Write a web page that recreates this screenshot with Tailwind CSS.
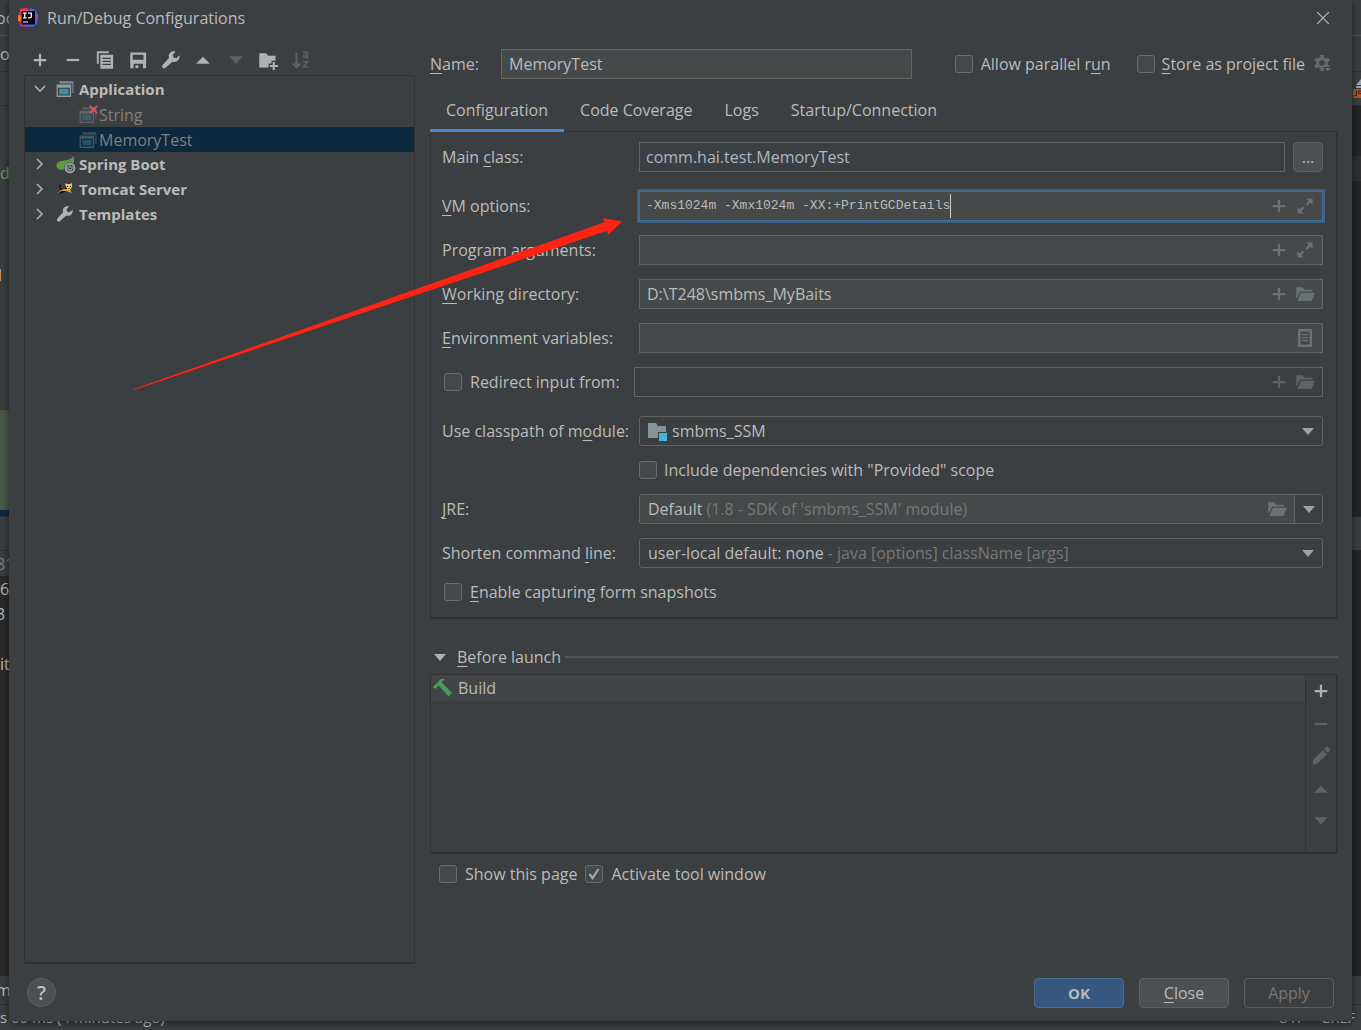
<!DOCTYPE html>
<html lang="en">
<head>
<meta charset="utf-8">
<meta name="viewport" content="width=device-width, initial-scale=1">
<title>Run/Debug Configurations</title>
<script src="https://cdn.jsdelivr.net/npm/@tailwindcss/browser@4"></script>
</head>
<body class="relative min-h-screen overflow-x-hidden bg-[#3c3f41] font-['Open_Sans','Noto_Sans',sans-serif] text-[16px] leading-5 text-[#bbbbbb]">

<!-- shared icon shapes -->
<svg class="hidden" aria-hidden="true">
  <symbol id="i-add" viewBox="0 0 16 16"><path d="M7.100 3h1.800v4.100H13v1.800H8.900V13H7.100V8.900H3V7.100h4.100z"/></symbol>
  <symbol id="i-remove" viewBox="0 0 16 16"><path d="M3 7.100h10v1.800H3z"/></symbol>
  <symbol id="i-up" viewBox="0 0 16 16"><path d="M2.500 11 8 5.300 13.500 11z"/></symbol>
  <symbol id="i-down" viewBox="0 0 16 16"><path d="M2.500 5 8 10.700 13.500 5z"/></symbol>
  <symbol id="i-wrench" viewBox="0 0 16 16"><path d="M14.700 4.200 12.300 6.500 10 5.900 9.400 3.700 11.700 1.300C10 .7 8.100 1.100 7 2.500 6.100 3.600 5.900 5 6.400 6.300L1.300 11.900c-.6.7-.6 1.600 0 2.300.7.700 1.700.7 2.400 0L9.100 9.300c1.400.6 3 .4 4.200-.7 1.300-1.100 1.900-2.800 1.400-4.400z"/></symbol>
  <symbol id="i-open" viewBox="0 0 16 16"><path d="M1 2.500h5l1.500 2H14V6H4.200L1 12z"/><path d="M4.800 7H16l-2.800 6.500H1.800z"/></symbol>
  <symbol id="i-expand" viewBox="0 0 16 16"><path d="M9 2h5v5l-1.800-1.800-2.400 2.500-1.200-1.200L11 4zM7 14H2V9l1.800 1.800 2.400-2.500 1.200 1.200L5 12z"/></symbol>
  <symbol id="i-app" viewBox="0 0 16 16"><path fill="#7f8b91" d="M3 1h12.500v10.500h-1V3H3z"/><path fill="#8f9ba1" fill-rule="evenodd" d="M.5 4h13v11H.5zm1.200 2.800v7h10.600v-7z"/><path fill="#3f8ea8" d="M2.800 7.800h8.400v5H2.800z"/></symbol>
  <symbol id="i-chev" viewBox="0 0 16 16"><path d="M5 3 10 8l-5 5" fill="none" stroke="#adadad" stroke-width="1.700"/></symbol>
</svg>

<!-- IDE window behind the dialog -->
<div class="absolute inset-0 flex justify-between overflow-hidden" aria-hidden="true">
  <div class="flex w-10 flex-col overflow-hidden bg-[#3c3f41]">
    <div class="flex h-9 items-center border-b border-[#555555]"><span class="-ml-1">oc</span></div>
    <div class="flex h-9 items-center border-b border-[#323232]">o</div>
    <div class="h-[34px] border-b border-[#323232]"></div>
    <div class="flex h-[133px] items-center text-[#62a257]">de</div>
    <div class="h-[30px]"></div>
    <div class="h-3 w-px bg-[#cc8f54]"></div>
    <div class="h-[129px]"></div>
    <div class="h-[100px] bg-[#4a5a4a]"></div>
    <div class="h-[6px] bg-[#0d293e]"></div>
    <div class="h-[34px] border-t border-[#323232]"></div>
    <div class="flex h-[26px] items-center border-t border-[#323232] text-[#808080]"><span class="-ml-1">81</span></div>
    <div class="flex flex-1 flex-col bg-[#2b2b2b]">
      <div class="flex h-[25px] items-center">6</div>
      <div class="-ml-1 flex h-[25px] items-center">3</div>
      <div class="h-[25px]"></div>
      <div class="flex h-[25px] items-center">it</div>
    </div>
    <div class="flex h-[28px] items-center"><span class="-ml-1">m</span></div>
    <div class="h-[26px] border-t border-[#323232]"></div>
  </div>
  <div class="flex w-10 flex-col overflow-hidden bg-[#252525]">
    <div class="h-9 border-b border-[#555555] bg-[#3c3f41]"></div>
    <div class="h-9 border-b border-[#323232] bg-[#3c3f41]"></div>
    <div class="flex h-[34px] flex-col items-end justify-center border-b border-[#323232] bg-[#3c3f41]">
      <svg class="h-5 w-2" viewBox="0 0 8 20"><path fill="#9aa7b0" d="M8 0v6H3zM3 7h5v2H3z"/><path fill="#b5532a" d="M0 10h8v9H0z"/><path fill="none" stroke="#3a2218" d="M3.500 12v4.500H1.500M8 12H5.500v2.500H8"/></svg>
    </div>
    <div class="h-[50px]"></div>
    <div class="h-[25px] bg-[#303030]"></div>
    <div class="h-[336px]"></div>
    <div class="h-[33px] bg-[#3c3f41]"></div>
    <div class="flex-1"></div>
    <div class="h-[28px] bg-[#3c3f41]"></div>
    <div class="h-[26px] border-t border-[#323232] bg-[#3c3f41]"></div>
  </div>
  <div class="absolute inset-x-0 bottom-0 flex h-[26px] items-center justify-between pr-[6px] text-[15px]">
    <span>s 00 ms (4 minutes ago)</span>
    <span class="flex gap-4"><span>UTF</span><span>CRLF</span></span>
  </div>
</div>

<!-- dialog -->
<main class="relative mx-[9px] mb-[9px] flex min-h-[calc(100vh-9px)] flex-col bg-[#3c3f41] shadow-[0_1px_8px_rgba(0,0,0,0.6)]">
  <header class="flex h-9 items-center pr-[19px] pl-2">
    <svg class="h-6 w-[22px]" viewBox="0 0 22 24">
      <path fill="#fe315d" d="M3 3 10 2l5 6-8 8-5-4z"/><path fill="#f97a12" d="M1 9l5 1 1 7-6-2z"/><path fill="#b333c9" d="M3 15h8l3 5-4 1-7-1z"/><path fill="#3b6cf0" d="m13 2 5 2 3 5-1 9-5 3-6-2z"/><path fill="#7a4fe0" d="m18 5 3 4-1 8-3-6z"/>
      <path fill="#050505" d="M4.500 5h13.500v13.500H4.500z"/><path fill="#fff" d="M6 15.500h5v1H6z"/><path fill="none" stroke="#fff" stroke-width="1.300" d="M6 7.200h3.600M7.800 7v5M6 11.800h3.600M11 7.200h3.300v3.300q0 1.400-1.600 1.300H11"/>
    </svg>
    <h1 class="ml-2 flex-1">Run/Debug Configurations</h1>
    <button aria-label="Close window" class="grid size-5 place-items-center"><svg class="size-3" viewBox="0 0 12 12"><path d="m0 0 12 12M12 0 0 12" stroke="#bbbbbb" stroke-width="1.200"/></svg></button>
  </header>

  <div class="flex flex-1 gap-[15px] pr-[14px] pl-[15px]">
    <!-- configuration tree -->
    <section class="flex w-[391px] shrink-0 flex-col pt-[9px]">
      <div class="flex h-[30px] w-[293px] fill-[#afb1b3]" role="toolbar" aria-label="Configurations">
        <button aria-label="Add" class="grid flex-1 place-items-center"><svg class="size-5"><use href="#i-add"/></svg></button>
        <button aria-label="Remove" class="grid flex-1 place-items-center"><svg class="size-5"><use href="#i-remove"/></svg></button>
        <button aria-label="Copy" class="grid flex-1 place-items-center"><svg class="size-5" viewBox="0 0 16 16"><path d="M1.500 1h9.500v1.500H3v8.500H1.500z"/><path fill-rule="evenodd" d="M4.300 3.800H14.500V15H4.300zM6 6.200v1h6.800v-1zm0 2.400v1h6.800v-1zM6 11v1h6.800v-1z"/></svg></button>
        <button aria-label="Save" class="grid flex-1 place-items-center"><svg class="size-5" viewBox="0 0 16 16"><path fill-rule="evenodd" d="M1.800 2h12.700v12.500h-2.500V11H4.500v3.500H1.800zM3.800 3.800v4h8.600v-4z"/><path d="M6 12.200h2.300v2.300H6z"/></svg></button>
        <button aria-label="Edit templates" class="grid flex-1 place-items-center"><svg class="size-5"><use href="#i-wrench"/></svg></button>
        <button aria-label="Move up" class="grid flex-1 place-items-center"><svg class="size-5"><use href="#i-up"/></svg></button>
        <button aria-label="Move down" disabled class="grid flex-1 place-items-center fill-[#5f6162]"><svg class="size-5"><use href="#i-down"/></svg></button>
        <button aria-label="New folder" class="grid flex-1 place-items-center"><svg class="size-5" viewBox="0 0 16 16"><path d="M1 2.500h5.500l1.500 2h6v4h-3.200v2.300H8.500V14H1z"/><path d="M11.800 9.500h1.700V12H16v1.600h-2.500V16h-1.700v-2.400H9.500V12h2.300z"/></svg></button>
        <button aria-label="Sort" disabled class="grid flex-1 place-items-center fill-[#5f6162]"><svg class="size-5" viewBox="0 0 20 20"><path d="M4.500 2.500h2v11h4L5.500 19l-5-5.500h4z"/><path fill="none" stroke="#5f6162" stroke-width="1.600" d="M12 2.300h3.500q1 0 1 1V8.500M16.500 4.800h-3q-1 0-1 1.200t1 1.200h3M12 11.800h4.300l-3.800 5H17"/></svg></button>
      </div>
      <ul role="tree" class="flex-1 border border-b-2 border-[#323232] text-[15px] font-bold">
        <li role="treeitem" class="flex h-[26px] items-center"><svg class="ml-[7px] size-4 rotate-90"><use href="#i-chev"/></svg><svg class="ml-[8px] size-[18px]"><use href="#i-app"/></svg><span class="ml-[5px]">Application</span></li>
        <li role="treeitem" class="flex h-[25px] items-center text-[16px] font-normal text-[#808080]"><span class="relative ml-[54px] size-[18px]"><svg class="size-[18px] opacity-40"><use href="#i-app"/></svg><svg class="absolute -top-px left-[10px] size-[9px]" viewBox="0 0 9 9"><path d="m.8.8 7.400 7.400M8.200.8.8 8.200" stroke="#db5860" stroke-width="1.900"/></svg></span><span class="ml-[2px]">String</span></li>
        <li role="treeitem" aria-selected="true" class="flex h-[25px] items-center bg-[#0d293e] text-[16px] font-normal text-[#808080]"><svg class="ml-[54px] size-[18px] opacity-40"><use href="#i-app"/></svg><span class="ml-[2px]">MemoryTest</span></li>
        <li role="treeitem" class="flex h-[24px] items-center"><svg class="ml-[7px] size-4"><use href="#i-chev"/></svg><svg class="ml-[8px] size-5" viewBox="0 0 20 20"><path fill="#5b9a42" d="M17.500 2c1 4 .8 8-1.500 10-3 3-9 4.500-12 3.500C1 15 0 12.500.5 10.500 1.500 6.500 6 7 10 6.200c3-.6 6-1.900 7.500-4.200z"/><circle cx="14" cy="14" r="5.700" fill="#3c3f41"/><circle cx="14" cy="14" r="4.400" fill="none" stroke="#9aa7b0" stroke-width="1.800"/><path fill="none" stroke="#9aa7b0" stroke-width="1.200" d="M14 11v3M12.300 12.500a2.200 2.200 0 1 0 3.400 0"/></svg><span class="ml-[3px]">Spring Boot</span></li>
        <li role="treeitem" class="flex h-[25px] items-center"><svg class="ml-[7px] size-4"><use href="#i-chev"/></svg><svg class="ml-[8px] size-[18px]" viewBox="0 0 18 18"><path fill="#d9a51f" d="m2 13 3-3 4-1 4-1 3 5-3-1-3-1-5 1-4 2z"/><path fill="#111" d="M3 5h2v3l2 1-3 1zM5 11l5 0-2 1.500-6 1.500zM9 7h2v2H9z"/><path fill="#eec66b" d="m9 3 2 1h3l2-1v4l-2 3h-2l-2-3z"/><path fill="#111" d="M11 6h1v1h-1zM14 6h1v1h-1zM12.500 8h1v1h-1z"/></svg><span class="ml-[5px]">Tomcat Server</span></li>
        <li role="treeitem" class="flex h-[25px] items-center"><svg class="ml-[7px] size-4"><use href="#i-chev"/></svg><svg class="ml-[8px] size-[18px] fill-[#afb1b3]"><use href="#i-wrench"/></svg><span class="ml-[5px]">Templates</span></li>
      </ul>
    </section>

    <!-- configuration editor -->
    <section class="flex min-w-0 flex-1 flex-col pt-[13px]">
      <div class="flex h-[30px] items-center">
        <label for="name" class="w-[71px] shrink-0"><u class="underline-offset-3">N</u>ame:</label>
        <input id="name" type="text" value="MemoryTest" class="h-[30px] min-w-0 flex-1 border border-[#646464] bg-[#45494a] px-[7px] outline-none">
        <span class="ml-[43px] flex items-center gap-2"><input id="par" type="checkbox" class="size-[18px] appearance-none rounded-[3px] border border-[#6b6b6b] bg-[#43494a]"><label for="par">Allow parallel r<u class="underline-offset-3">u</u>n</label></span>
        <span class="ml-[26px] flex items-center gap-[7px]"><input id="store" type="checkbox" class="size-[18px] appearance-none rounded-[3px] border border-[#6b6b6b] bg-[#43494a]"><label for="store"><u class="underline-offset-3">S</u>tore as project file</label></span>
        <button aria-label="Storage options" class="mr-[5px] ml-2"><svg class="size-5" viewBox="0 0 20 20"><circle cx="9" cy="9" r="4.300" fill="none" stroke="#66696b" stroke-width="3.200"/><path stroke="#66696b" stroke-width="3.400" d="M9 1v3M9 14v3M2 5l2.800 1.600M13.200 11.400 16 13M2 13l2.800-1.600M13.200 6.600 16 5"/><path fill="#66696b" stroke="#3c3f41" d="M10.500 13.500h8.600L14.800 18z"/></svg></button>
      </div>

      <div role="tablist" class="relative -mb-px mt-[12px] flex h-[41px]">
        <button role="tab" aria-selected="true" class="border-b-[3px] border-[#4a88c7] px-4">Configuration</button>
        <button role="tab" class="border-b-[3px] border-transparent px-4">Code Coverage</button>
        <button role="tab" class="border-b-[3px] border-transparent px-4">Logs</button>
        <button role="tab" class="border-b-[3px] border-transparent px-4">Startup/Connection</button>
      </div>

      <form class="flex flex-col gap-[14px] border border-r-2 border-b-2 border-[#323232] pt-[10px] pr-[13px] pb-[15px] pl-[11px]">
        <div class="mb-[5px] grid h-[30px] grid-cols-[197px_1fr_30px] items-center">
          <label for="main">Main <u class="underline-offset-3">c</u>lass:</label>
          <input id="main" type="text" value="comm.hai.test.MemoryTest" class="mr-2 h-[30px] min-w-0 border border-[#646464] px-[6px] text-[#a9b7c6] outline-none">
          <button type="button" class="h-[30px] rounded-[4px] border border-[#5e6060] bg-[#4c5052]">...</button>
        </div>
        <div class="grid h-[30px] grid-cols-[197px_1fr] items-center">
          <label for="vm"><u class="underline-offset-3">V</u>M options:</label>
          <div class="flex h-[30px] items-center border border-[#4a6d94] bg-[#45494a] pr-[7px] pl-[6px] ring-2 ring-[#3d6185]">
            <input id="vm" type="text" value="-Xms1024m -Xmx1024m -XX:+PrintGCDetails" class="[field-sizing:content] font-['Liberation_Mono',monospace] text-[13px] outline-none">
            <span class="h-6 w-px bg-[#d0d0d0]"></span>
            <span class="ml-auto flex gap-[6px] fill-[#6a7276]"><svg class="size-5"><use href="#i-add"/></svg><svg class="size-5"><use href="#i-expand"/></svg></span>
          </div>
        </div>
        <div class="grid h-[30px] grid-cols-[197px_1fr] items-center">
          <label for="args">Program arguments:</label>
          <div class="flex h-[30px] items-center border border-[#646464] bg-[#45494a] px-[7px]">
            <input id="args" type="text" class="min-w-0 flex-1 outline-none">
            <span class="flex gap-[6px] fill-[#6a7276]"><svg class="size-5"><use href="#i-add"/></svg><svg class="size-5"><use href="#i-expand"/></svg></span>
          </div>
        </div>
        <div class="grid h-[30px] grid-cols-[197px_1fr] items-center">
          <label for="wd"><u class="underline-offset-3">W</u>orking directory:</label>
          <div class="flex h-[30px] items-center border border-[#646464] bg-[#45494a] px-[7px]">
            <input id="wd" type="text" value="D:\T248\smbms_MyBaits" class="min-w-0 flex-1 outline-none">
            <span class="flex gap-[6px] fill-[#6a7276]"><svg class="size-5"><use href="#i-add"/></svg><svg class="size-5"><use href="#i-open"/></svg></span>
          </div>
        </div>
        <div class="grid h-[30px] grid-cols-[197px_1fr] items-center">
          <label for="env"><u class="underline-offset-3">E</u>nvironment variables:</label>
          <div class="flex h-[30px] items-center border border-[#646464] bg-[#45494a] px-[7px]">
            <input id="env" type="text" class="min-w-0 flex-1 outline-none">
            <svg class="size-5 fill-[#6a7276]" viewBox="0 0 20 20"><path fill-rule="evenodd" d="M3 1h14v18H3zm2.500 2.500v13h9v-13z"/><path d="M7 6h6v1.300H7zM7 9h6v1.300H7zM7 12h6v1.300H7z"/></svg>
          </div>
        </div>
        <div class="grid h-[30px] grid-cols-[192px_1fr] items-center">
          <span class="flex items-center gap-2 pl-[2px]"><input id="redir" type="checkbox" class="size-[18px] appearance-none rounded-[3px] border border-[#6b6b6b] bg-[#43494a]"><label for="redir">Redirect input from:</label></span>
          <div class="flex h-[30px] items-center border border-[#646464] px-[7px]">
            <input type="text" aria-label="Redirect input from" class="min-w-0 flex-1 outline-none">
            <span class="flex gap-[6px] fill-[#5e6365]"><svg class="size-5"><use href="#i-add"/></svg><svg class="size-5"><use href="#i-open"/></svg></span>
          </div>
        </div>
        <div class="mt-[5px] grid h-[30px] grid-cols-[197px_1fr] items-center">
          <label for="mod">Use classpath of m<u class="underline-offset-3">o</u>dule:</label>
          <div class="flex h-[30px] items-center rounded-[3px] border border-[#646464] pr-2 pl-[7px]">
            <svg class="size-5" viewBox="0 0 20 20"><path fill="#87939a" d="M1 2h8l2 3h8v12H1z"/><path fill="#3c3f41" d="M11 11h9v9h-9z"/><path fill="#40b6e0" d="M12 12h8v8h-8z"/></svg>
            <select id="mod" class="ml-[5px] min-w-0 flex-1 appearance-none outline-none"><option>smbms_SSM</option></select>
            <svg class="h-[7px] w-3 fill-[#9fa2a4]" viewBox="0 0 12 7"><path d="M0 0h12L6 7z"/></svg>
          </div>
        </div>
        <div class="flex h-5 items-center gap-[7px] pl-[197px]"><input id="inc" type="checkbox" class="size-[18px] appearance-none rounded-[3px] border border-[#6b6b6b] bg-[#43494a]"><label for="inc">Include dependencies with "Provided" scope</label></div>
        <div class="grid h-[30px] grid-cols-[197px_1fr] items-center">
          <label for="jre"><u class="underline-offset-3">J</u>RE:</label>
          <div class="flex h-[30px] items-center rounded-[3px] border border-[#646464] bg-[#45494a] pl-2">
            <input id="jre" type="text" value="Default" class="[field-sizing:content] outline-none">
            <span class="ml-1 flex-1 text-[#787878]">(1.8 - SDK of 'smbms_SSM' module)</span>
            <svg class="mr-[7px] size-5 fill-[#6a7276]"><use href="#i-open"/></svg>
            <button type="button" aria-label="Show JREs" class="grid h-full w-7 place-items-center border-l border-[#646464] bg-[#3c3f41]"><svg class="h-[7px] w-3 fill-[#9fa2a4]" viewBox="0 0 12 7"><path d="M0 0h12L6 7z"/></svg></button>
          </div>
        </div>
        <div class="grid h-[30px] grid-cols-[197px_1fr] items-center">
          <label for="short">Shorten command <u class="underline-offset-3">l</u>ine:</label>
          <div class="flex h-[30px] items-center rounded-[3px] border border-[#646464] px-2">
            <select id="short" class="[field-sizing:content] appearance-none outline-none"><option>user-local default: none</option></select>
            <span class="ml-1 flex-1 text-[#787878]">- java [options] className [args]</span>
            <svg class="h-[7px] w-3 fill-[#9fa2a4]" viewBox="0 0 12 7"><path d="M0 0h12L6 7z"/></svg>
          </div>
        </div>
        <div class="flex h-5 items-center gap-2 pl-[2px]"><input id="snap" type="checkbox" class="size-[18px] appearance-none rounded-[3px] border border-[#6b6b6b] bg-[#43494a]"><label for="snap"><u class="underline-offset-3">E</u>nable capturing form snapshots</label></div>
      </form>

      <div class="mt-6 flex h-7 items-center">
        <svg class="ml-1 h-[7px] w-3 fill-[#afb1b3]" viewBox="0 0 12 7"><path d="M0 0h12L6 7z"/></svg>
        <h2 class="ml-[11px]"><u class="underline-offset-3">B</u>efore launch</h2>
        <span class="ml-1 h-[2px] flex-1 bg-[#515355]"></span>
      </div>
      <div class="mt-[3px] flex h-[180px] border border-r-2 border-b-2 border-[#323232]">
        <ul class="flex-1">
          <li class="flex h-[26px] items-center bg-[#414547] pl-[2px]"><svg class="size-5" viewBox="0 0 20 20"><path fill="#499c54" d="M0 9 8 .8l4 .2-3.500 3 10.500 11-3.500 3.500L5.500 7.500 2.500 11z"/></svg><span class="ml-[5px]">Build</span></li>
        </ul>
        <div class="flex w-[31px] flex-col border-l border-[#323232] fill-[#5f6162]" role="toolbar" aria-label="Before launch">
          <button aria-label="Add task" class="grid h-8 place-items-center fill-[#afb1b3]"><svg class="size-5"><use href="#i-add"/></svg></button>
          <button aria-label="Remove task" disabled class="grid h-[33px] place-items-center"><svg class="size-5"><use href="#i-remove"/></svg></button>
          <button aria-label="Edit task" disabled class="grid h-8 place-items-center"><svg class="size-5" viewBox="0 0 16 16"><path d="m1.500 11.300 8-8 3.200 3.200-8 8H1.500zM10.500 2.500 12 1c.6-.5 1.300-.5 1.900 0L15 2.100c.5.600.5 1.300 0 1.900l-1.400 1.500z"/></svg></button>
          <button aria-label="Move task up" disabled class="grid h-[33px] place-items-center"><svg class="size-5"><use href="#i-up"/></svg></button>
          <button aria-label="Move task down" disabled class="grid h-8 place-items-center"><svg class="size-5"><use href="#i-down"/></svg></button>
        </div>
      </div>
      <div class="mt-[10px] flex h-5 items-center pl-[9px]">
        <input id="show" type="checkbox" class="size-[18px] appearance-none rounded-[3px] border border-[#6b6b6b] bg-[#43494a]"><label for="show" class="ml-2">Show this page</label>
        <span class="ml-2 grid size-[18px]"><input id="act" type="checkbox" checked class="col-start-1 row-start-1 size-[18px] appearance-none rounded-[3px] border border-[#6b6b6b] bg-[#43494a]"><svg class="pointer-events-none col-start-1 row-start-1 size-[18px]" viewBox="0 0 18 18"><path d="m4.500 9 3 4L13.500 4" fill="none" stroke="#a7a7a7" stroke-width="2.200"/></svg></span><label for="act" class="ml-2">Activate tool window</label>
      </div>
    </section>
  </div>

  <footer class="flex h-[57px] items-center gap-[15px] pr-[18px] pl-[18px]">
    <button aria-label="Help" class="mr-auto grid size-[29px] place-items-center rounded-full border border-[#5e6060] bg-[#4c5052] text-xl font-semibold">?</button>
    <button class="h-[30px] w-[90px] rounded-[4px] border border-[#4c708c] bg-[#365880] text-[15px] font-bold">OK</button>
    <button class="h-[30px] w-[90px] rounded-[4px] border border-[#5e6060] bg-[#4c5052]"><u class="underline-offset-3">C</u>lose</button>
    <button disabled class="h-[30px] w-[90px] rounded-[4px] border border-[#5e6060] text-[#777777]">Apply</button>
  </footer>
</main>

<!-- annotation arrow -->
<svg class="pointer-events-none absolute top-[216px] left-[132px] h-[176px] w-[492px]" viewBox="132 216 492 176" aria-hidden="true"><path fill="#ff2314" d="m134 389 471-167-3-4 20 3.500L608 235l-1-4.200L134 390z"/></svg>
</body>
</html>
